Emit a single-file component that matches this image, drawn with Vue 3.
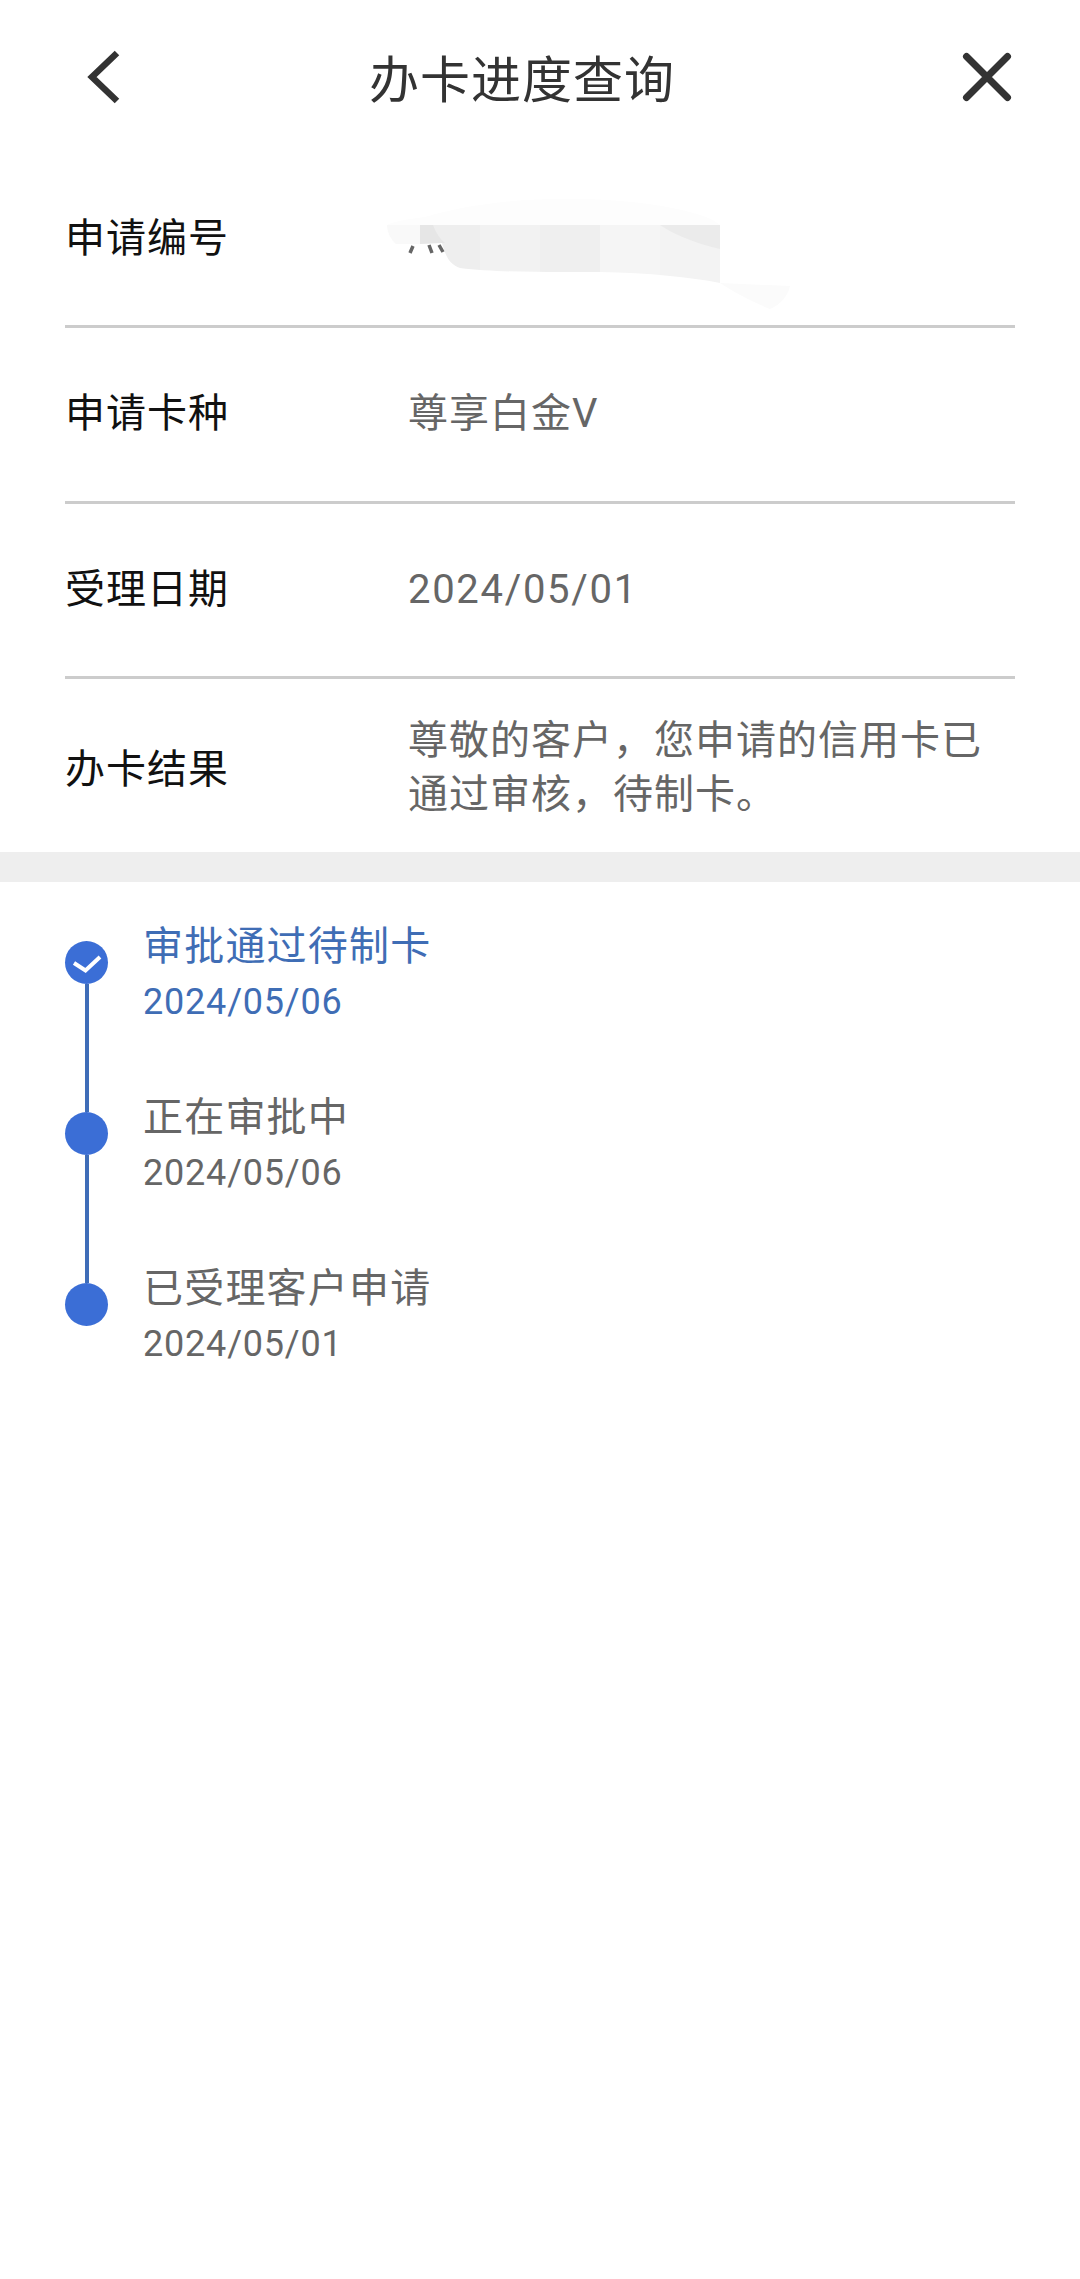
<script setup>
const rows = [
  { label: '申请卡种', value: '尊享白金V' },
  { label: '受理日期', value: '2024/05/01', numeric: true },
]

const steps = [
  { title: '审批通过待制卡', date: '2024/05/06', done: true },
  { title: '正在审批中', date: '2024/05/06', done: false },
  { title: '已受理客户申请', date: '2024/05/01', done: false },
]

// the privacy smudge over the application number is made of flat tinted blocks
const maskBlocks = [
  { x: 50, width: 60, fill: '#eeeeee' },
  { x: 110, width: 60, fill: '#f2f2f2' },
  { x: 170, width: 60, fill: '#efefef' },
  { x: 230, width: 60, fill: '#f5f5f5' },
  { x: 290, width: 60, fill: '#f3f3f3' },
]
</script>

<template>
  <div class="page">
    <header class="nav">
      <svg class="back" width="40" height="60" viewBox="0 0 40 60">
        <path d="M35 6 L10 30 L35 54" fill="none" stroke="#333" stroke-width="6.500" />
      </svg>
      <div class="title">办卡进度查询</div>
      <svg class="close" width="52" height="52" viewBox="0 0 52 52">
        <path d="M5.500 5.500 L46.500 46.500 M46.500 5.500 L5.500 46.500" fill="none" stroke="#333" stroke-width="7" stroke-linecap="round" />
      </svg>
    </header>

    <section class="info">
      <div class="row">
        <div class="label">申请编号</div>
        <div class="value masked">
          <svg class="smudge" width="440" height="150" viewBox="0 0 440 150">
            <defs>
              <clipPath id="mask-shape">
                <path d="M50 44 H350 V102 C320 96 280 92 230 91 C190 91 130 92 90 87 C80 83 76 77 72 62 L50 63 Z" />
              </clipPath>
            </defs>
            <path d="M55 36 C110 20 180 14 250 20 C300 24 340 34 350 44 H17 C25 40 40 38 55 36 Z" fill="#fdfdfd" />
            <path d="M17 44 H50 V63 H26 C20 58 17 50 17 44 Z" fill="#f9f9f9" />
            <g clip-path="url(#mask-shape)">
              <rect v-for="block in maskBlocks" :key="block.x" :x="block.x" y="44" :width="block.width" height="60" :fill="block.fill" />
              <path d="M50 44 H63 C66 52 70 58 75 62 L50 63 Z" fill="#e6e6e6" />
              <path d="M290 44 H350 V68 C325 62 305 54 290 44 Z" fill="#ebebeb" />
            </g>
            <path d="M350 102 L420 105 C418 115 410 124 400 128 C385 122 365 112 350 102 Z" fill="#fbfbfb" />
            <path d="M43 65 L40 72 M59 64 L62 72 M69 64 L73 71" fill="none" stroke="#666" stroke-width="3.500" />
          </svg>
        </div>
      </div>
      <div v-for="row in rows" :key="row.label" class="row">
        <div class="label">{{ row.label }}</div>
        <div class="value" :class="{ numeric: row.numeric }">{{ row.value }}</div>
      </div>
      <div class="row last">
        <div class="label">办卡结果</div>
        <div class="value">尊敬的客户，您申请的信用卡已<br />通过审核，待制卡。</div>
      </div>
    </section>

    <div class="band"></div>

    <section class="timeline">
      <div v-for="(step, i) in steps" :key="i" class="step" :class="{ done: step.done }">
        <div class="rail">
          <div class="dot">
            <svg v-if="step.done" width="34" height="24" viewBox="0 0 34 24">
              <path d="M4 12 L15.500 19.500 L30 6" fill="none" stroke="#fff" stroke-width="4" />
            </svg>
          </div>
          <div v-if="i < steps.length - 1" class="line"></div>
        </div>
        <div class="text">
          <div class="step-title">{{ step.title }}</div>
          <div class="step-date">{{ step.date }}</div>
        </div>
      </div>
    </section>
  </div>
</template>

<style>
html, body {
  margin: 0;
  background: #fff;
}
</style>

<style scoped>
.page {
  width: 1080px;
  height: 2279px;
  background: #fff;
  font-family: Roboto, "Noto Sans CJK SC", sans-serif;
  overflow: hidden;
}
.nav {
  height: 152.5px;
  position: relative;
  display: flex;
  align-items: center;
  justify-content: center;
}
.title {
  font-size: 50px;
  color: #333;
  margin-left: -36px;
  letter-spacing: 1px;
}
.back {
  position: absolute;
  left: 82px;
  top: 47px;
}
.close {
  position: absolute;
  left: 961px;
  top: 51px;
}
.info {
  padding: 0 65px;
}
.row {
  box-sizing: border-box;
  height: 175.5px;
  border-bottom: 3px solid #ccc;
  display: flex;
  align-items: center;
}
.row.last {
  height: 173px;
  border-bottom: 0;
  padding-top: 6px;
}
.row.last .label {
  margin-top: 2px;
}
.row.last .value {
  margin-top: -2px;
}
.label {
  width: 343px;
  flex-shrink: 0;
  font-size: 40px;
  line-height: 54px;
  color: #111;
  letter-spacing: 1px;
}
.value {
  font-size: 40px;
  line-height: 54px;
  color: #666;
  letter-spacing: 1px;
}
.value.numeric {
  letter-spacing: 1.7px;
}
.masked {
  position: relative;
  height: 54px;
  flex: 1;
}
.smudge {
  position: absolute;
  left: -38px;
  top: -31px;
}
.band {
  height: 30px;
  background: #eee;
}
.timeline {
  padding: 44px 0 0 65px;
}
.step {
  display: flex;
  height: 170.9px;
}
.rail {
  width: 43px;
  flex-shrink: 0;
  margin-right: 35px;
  position: relative;
  padding-top: 15px;
}
.dot {
  width: 43px;
  height: 43px;
  border-radius: 50%;
  background: #3b6ed6;
  display: flex;
  align-items: center;
  justify-content: center;
}
.line {
  position: absolute;
  left: 19.5px;
  top: 58px;
  bottom: -15px;
  width: 4px;
  background: #3f6db8;
}
.text {
  margin-top: -6px;
}
.step-title {
  font-size: 40px;
  line-height: 54px;
  color: #666;
  letter-spacing: 1.2px;
}
.step-date {
  font-size: 36px;
  line-height: 42px;
  margin-top: 7px;
  color: #666;
  letter-spacing: 0.8px;
}
.done .step-title,
.done .step-date {
  color: #3f6db5;
}
</style>
